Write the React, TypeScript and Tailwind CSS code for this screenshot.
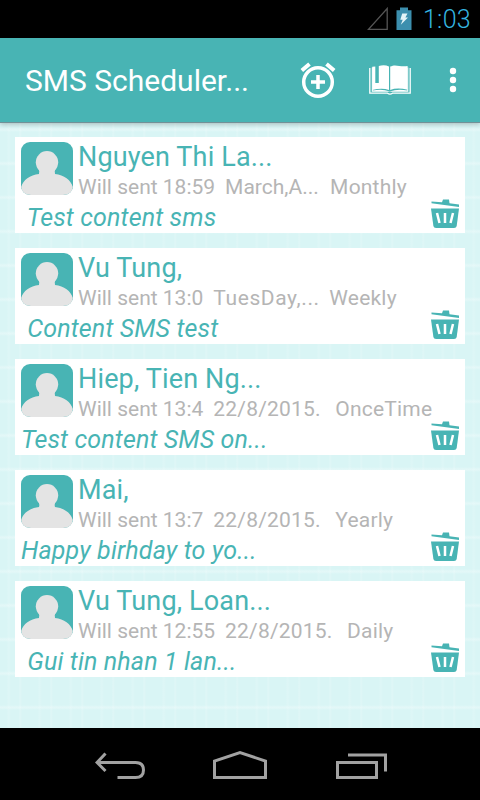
import clsx from "clsx";

interface Schedule {
  name: string;
  time: string;
  date: string;
  dateWidth: string;
  repeat: string;
  content: string;
}

const schedules: Schedule[] = [
  { name: "Nguyen Thi La...", time: "18:59", date: "March,A...", dateWidth: "w-[105px]", repeat: "Monthly", content: " Test content sms" },
  { name: "Vu Tung,", time: "13:0", date: "TuesDay,...", dateWidth: "w-[116px] tracking-[0.6px]", repeat: "Weekly", content: " Content SMS test" },
  { name: "Hiep, Tien Ng...", time: "13:4", date: "22/8/2015.", dateWidth: "w-[122px] tracking-[0.2px]", repeat: "OnceTime", content: "Test content SMS on..." },
  { name: "Mai,", time: "13:7", date: "22/8/2015.", dateWidth: "w-[122px] tracking-[0.2px]", repeat: "Yearly", content: "Happy birhday to yo..." },
  { name: "Vu Tung, Loan...", time: "12:55", date: "22/8/2015.", dateWidth: "w-[122px] tracking-[0.2px]", repeat: "Daily", content: " Gui tin nhan 1 lan..." },
];

function StatusBar() {
  return (
    <div className="flex h-[38px] items-center justify-end bg-black pr-[9px]">
      <svg width="22" height="24" viewBox="0 0 22 24" fill="none" stroke="#555" strokeWidth="1.3">
        <path d="M1.5 22.3H20.2V1.5Z" />
      </svg>
      <svg className="ml-[7px]" width="16" height="24" viewBox="0 0 16 24">
        <path d="M4 0.5h8v2.8h3.5V23H.5V3.3H4Z" fill="#3c8fae" />
        <path d="M6.2 6.5h5.3L9.4 10.6h2.6L4.8 17.8l1.9-5H4.3Z" fill="#e4f4f8" />
      </svg>
      <div className="ml-[11px] pt-[2px] text-[25px] font-light leading-[36px] tracking-[0.3px] text-[#35b5e0]">1:03</div>
    </div>
  );
}

function AlarmIcon() {
  return (
    <svg width="36" height="38" viewBox="0 0 36 38" fill="none" stroke="white">
      <circle cx="18" cy="21" r="14.3" strokeWidth="3.5" />
      <path d="M11 21H25M18 14V28" strokeWidth="3.5" />
      <path d="M1.8 9.5L9.5 3M34.2 9.5L26.5 3" strokeWidth="4" />
    </svg>
  );
}

function BookIcon() {
  return (
    <svg width="42" height="32" viewBox="0 0 42 32" fill="white">
      <path d="M.8 4V29.2H18.5Q21 31 23.5 29.2H41.2V4" fill="none" stroke="white" strokeWidth="1.3" />
      <path d="M2.8 3.4H3.8V26.6Q13 24.8 20.7 27.4Q29 24.8 38.3 26.6V3.4H39.3V27.8H2.8Z" />
      {/* left page wraps round the bookmark gap */}
      <path d="M3.3 2.8L6.3 2.4V19H9.8V2Q15.5 .2 20 2.6V26Q13 23.4 3.3 26Z" />
      <path d="M21.2 2.6C27-.5 31 3.5 38.6 2V25.7Q28 23.2 21.2 26Z" />
    </svg>
  );
}

function Toolbar() {
  return (
    <div className="relative z-10 flex h-[85px] items-center border-b border-[#729197] bg-[#48b4b4] pl-[25px] shadow-[0_1px_5px_rgba(0,0,0,0.25)]">
      <div className="w-[275px] pt-px text-[30px] leading-[40px] text-white">SMS Scheduler...</div>
      <AlarmIcon />
      <div className="ml-[33px]">
        <BookIcon />
      </div>
      <svg className="ml-[38px]" width="8" height="26" viewBox="0 0 8 26" fill="white">
        <circle cx="4" cy="4" r="3.2" />
        <circle cx="4" cy="13" r="3.2" />
        <circle cx="4" cy="22" r="3.2" />
      </svg>
    </div>
  );
}

function Avatar() {
  return (
    <svg className="shrink-0" width="52" height="53" viewBox="0 0 52 53">
      <rect width="52" height="53" rx="9" fill="#48b4b4" />
      <circle cx="26" cy="20.3" r="11.2" fill="#e4e4e4" />
      <path
        d="M17 26Q19 29 18 32C9 33 2 38 .2 45Q1.5 53 10 53H42Q50.500 53 51.800 45C50 38 43 33 34 32Q33 29 35 26Z"
        fill="#e4e4e4"
      />
    </svg>
  );
}

function TrashIcon() {
  return (
    <svg width="30" height="30" viewBox="0 0 30 30">
      <path d="M1.500 2.500L12 3.300L13 .5H19L19.500 4.200L29 5.600V8L1.500 4.300Z" fill="#48b4b4" />
      <path d="M1 9.500H29L26.700 27Q26.300 29 24 29H6Q3.800 29 3.400 27Z" fill="#48b4b4" />
      <path d="M7 14L9.500 24M15 14V24M23 14L20.500 24" stroke="white" strokeWidth="2.500" />
    </svg>
  );
}

function ScheduleCard({ name, time, date, dateWidth, repeat, content }: Schedule) {
  return (
    <div className="flex h-24 bg-white pr-[5px]">
      <div className="min-w-0 flex-1">
        <div className="flex h-[66px] pl-[6px] pt-[5px]">
          <Avatar />
          <div className="ml-[5px] whitespace-pre">
            <div className="h-[30px] text-[27px] leading-[30px] tracking-[0.15px] text-[#48b4b4]">{name}</div>
            <div className="flex text-[21px] leading-[30px] text-[#b5b5b5]">
              <span>Will sent {time}</span>
              <span className={clsx("ml-[10px]", dateWidth)}>{date}</span>
              <span className="tracking-[0.2px]">{repeat}</span>
            </div>
          </div>
        </div>
        <div className="pl-[6px] text-[25px] italic leading-[30px] tracking-[0.15px] whitespace-pre text-[#48b4b4]">
          {content}
        </div>
      </div>
      <div className="-ml-[30px] flex items-end pb-[4px]">
        <TrashIcon />
      </div>
    </div>
  );
}

function NavBar() {
  return (
    <div className="flex h-[72px] items-center bg-black pl-[95px] pt-[4px]">
      <svg width="50" height="30" viewBox="0 0 50 30" fill="none" stroke="#a2a2a2" strokeWidth="3">
        <path d="M2 11.5H40.5Q48.5 11.5 48.5 19T40.5 26.5H22.5" />
        <path d="M10.5 2.5L2 11.5L10.5 20" />
      </svg>
      <svg className="ml-[68px]" width="54" height="30" viewBox="0 0 54 30" fill="none" stroke="#a2a2a2" strokeWidth="3">
        <path d="M1.5 26.5V10L27 1.6L52.5 10V26.5Z" />
      </svg>
      <svg className="ml-[69px]" width="52" height="30" viewBox="0 0 52 30" fill="none" stroke="#a2a2a2" strokeWidth="3">
        <path d="M1.5 11.5H40.5V26.5H1.5Z" />
        <path d="M12 4H49.5V20.5" />
      </svg>
    </div>
  );
}

export default function App() {
  return (
    <div className="flex h-[800px] w-[480px] flex-col overflow-hidden font-['Roboto',sans-serif]">
      <StatusBar />
      <Toolbar />
      <div
        className={clsx(
          "flex flex-1 flex-col gap-[15px] bg-[#d9f5f5] px-[15px] pt-[14px]",
          "bg-[repeating-linear-gradient(90deg,transparent_0_7px,#ffffff1c_8px_9px,transparent_11px_19px,#ffffff30_20px,transparent_22px_31px),repeating-linear-gradient(0deg,transparent_0_18px,#ffffff40_20px_21px,transparent_23px_34px)]"
        )}
      >
        {schedules.map((schedule) => (
          <ScheduleCard key={schedule.name} {...schedule} />
        ))}
      </div>
      <NavBar />
    </div>
  );
}
